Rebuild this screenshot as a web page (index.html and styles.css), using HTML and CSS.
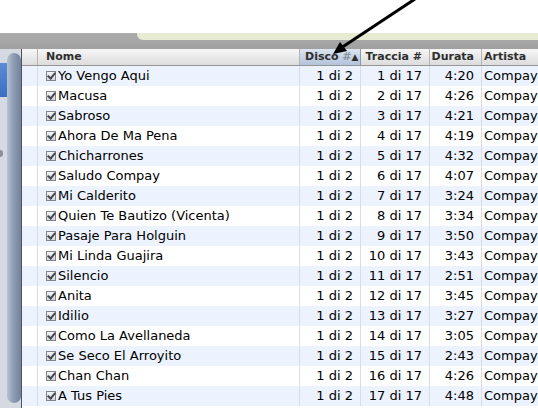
FILE: index.html
```html
<!DOCTYPE html>
<html>
	<head>
		<meta charset="UTF-8">
		<title>Libreria</title>
		<link rel="stylesheet" href="styles.css">
	</head>
	<body>
		<div class="top"></div>
		<div class="bar"><div class="field"></div></div>
		<div class="main">
			<div class="side">
				<div class="edge"><div class="sel"></div><div class="knob"></div></div>
				<div class="track"><div class="thumb"></div></div>
			</div>
			<div class="list">
				<div class="row head">
					<div class="c0"></div>
					<div class="c1">Nome</div>
					<div class="c2 sorted"><span>Disco <span class="hash">#</span></span><span class="tri">&#9650;</span></div>
					<div class="c3">Traccia #</div>
					<div class="c4">Durata</div>
					<div class="c5">Artista</div>
				</div>
				<div class="row"><div class="c0"></div><div class="c1"><i class="chk"></i>Yo Vengo Aqui</div><div class="c2">1 di 2</div><div class="c3">1 di 17</div><div class="c4">4:20</div><div class="c5">Compay</div></div>
				<div class="row"><div class="c0"></div><div class="c1"><i class="chk"></i>Macusa</div><div class="c2">1 di 2</div><div class="c3">2 di 17</div><div class="c4">4:26</div><div class="c5">Compay</div></div>
				<div class="row"><div class="c0"></div><div class="c1"><i class="chk"></i>Sabroso</div><div class="c2">1 di 2</div><div class="c3">3 di 17</div><div class="c4">4:21</div><div class="c5">Compay</div></div>
				<div class="row"><div class="c0"></div><div class="c1"><i class="chk"></i>Ahora De Ma Pena</div><div class="c2">1 di 2</div><div class="c3">4 di 17</div><div class="c4">4:19</div><div class="c5">Compay</div></div>
				<div class="row"><div class="c0"></div><div class="c1"><i class="chk"></i>Chicharrones</div><div class="c2">1 di 2</div><div class="c3">5 di 17</div><div class="c4">4:32</div><div class="c5">Compay</div></div>
				<div class="row"><div class="c0"></div><div class="c1"><i class="chk"></i>Saludo Compay</div><div class="c2">1 di 2</div><div class="c3">6 di 17</div><div class="c4">4:07</div><div class="c5">Compay</div></div>
				<div class="row"><div class="c0"></div><div class="c1"><i class="chk"></i>Mi Calderito</div><div class="c2">1 di 2</div><div class="c3">7 di 17</div><div class="c4">3:24</div><div class="c5">Compay</div></div>
				<div class="row"><div class="c0"></div><div class="c1"><i class="chk"></i>Quien Te Bautizo (Vicenta)</div><div class="c2">1 di 2</div><div class="c3">8 di 17</div><div class="c4">3:34</div><div class="c5">Compay</div></div>
				<div class="row"><div class="c0"></div><div class="c1"><i class="chk"></i>Pasaje Para Holguin</div><div class="c2">1 di 2</div><div class="c3">9 di 17</div><div class="c4">3:50</div><div class="c5">Compay</div></div>
				<div class="row"><div class="c0"></div><div class="c1"><i class="chk"></i>Mi Linda Guajira</div><div class="c2">1 di 2</div><div class="c3">10 di 17</div><div class="c4">3:43</div><div class="c5">Compay</div></div>
				<div class="row"><div class="c0"></div><div class="c1"><i class="chk"></i>Silencio</div><div class="c2">1 di 2</div><div class="c3">11 di 17</div><div class="c4">2:51</div><div class="c5">Compay</div></div>
				<div class="row"><div class="c0"></div><div class="c1"><i class="chk"></i>Anita</div><div class="c2">1 di 2</div><div class="c3">12 di 17</div><div class="c4">3:45</div><div class="c5">Compay</div></div>
				<div class="row"><div class="c0"></div><div class="c1"><i class="chk"></i>Idilio</div><div class="c2">1 di 2</div><div class="c3">13 di 17</div><div class="c4">3:27</div><div class="c5">Compay</div></div>
				<div class="row"><div class="c0"></div><div class="c1"><i class="chk"></i>Como La Avellaneda</div><div class="c2">1 di 2</div><div class="c3">14 di 17</div><div class="c4">3:05</div><div class="c5">Compay</div></div>
				<div class="row"><div class="c0"></div><div class="c1"><i class="chk"></i>Se Seco El Arroyito</div><div class="c2">1 di 2</div><div class="c3">15 di 17</div><div class="c4">2:43</div><div class="c5">Compay</div></div>
				<div class="row"><div class="c0"></div><div class="c1"><i class="chk"></i>Chan Chan</div><div class="c2">1 di 2</div><div class="c3">16 di 17</div><div class="c4">4:26</div><div class="c5">Compay</div></div>
				<div class="row"><div class="c0"></div><div class="c1"><i class="chk"></i>A Tus Pies</div><div class="c2">1 di 2</div><div class="c3">17 di 17</div><div class="c4">4:48</div><div class="c5">Compay</div></div>
			</div>
		</div>
		<!-- freccia nera sopra l'intestazione -->
		<svg class="arrow" width="538" height="70" viewBox="0 0 538 70">
			<line x1="415" y1="-1" x2="341" y2="48" stroke="#000" stroke-width="3"/>
			<polygon points="333,54 347,51 340,42" fill="#000"/>
		</svg>
	</body>
</html>
```

FILE: styles.css
```css
*{ margin: 0; padding: 0; box-sizing: border-box;}
body{ width: 538px; height: 408px; overflow: hidden; background: #fff; font-family: "DejaVu Sans", "Liberation Sans", sans-serif; position: relative;}
.top{ height: 33px;}
.bar{ height: 16px; background: linear-gradient(#acacac, #a0a0a0); display: flex; justify-content: flex-end;}
.field{ width: 401px; height: 7px; background: #e8ebd4; border-bottom-left-radius: 6px;}
.main{ display: flex; height: 359px;}
/* barra laterale con lo scorrimento */
.side{ width: 22px; display: flex; border-right: 1px solid #4f5560; background: #d5dae2;}
.edge{ width: 7px; display: flex; flex-direction: column;}
.sel{ margin-top: 14px; height: 34px; background: linear-gradient(#5d8bd5, #3c6fc2);}
.knob{ margin-top: 53px; width: 3px; height: 7px; background: #8a8f98; border-radius: 0 4px 4px 0;}
.track{ width: 14px; padding: 4px 0 5px;}
.thumb{ height: 100%; border-radius: 7px; background: linear-gradient(90deg, #b7c2d2, #8e9db5 45%, #71829e);}
.list{ flex: 1; min-width: 0;}
/* righe della tabella */
.row{ display: grid; grid-template-columns: 16px 262px 61px 69px 52px 1fr; height: 20px; font-size: 13px; line-height: 20px; color: #000;}
.row:nth-child(even){ background: #edf3fe;}
.row > div{ border-right: 1px solid #d9dde3; white-space: nowrap; overflow: hidden;}
.row .c1{ padding-left: 8px; display: flex; align-items: center;}
.row .c2, .row .c3, .row .c4{ text-align: right; padding-right: 7px;}
.row .c5{ padding-left: 2px; border-right: 0; overflow: visible;}
.chk{ display: inline-block; width: 10px; height: 10px; margin-right: 2px; border: 1px solid #80838a; background: linear-gradient(#f4f5f7, #d3d6db); position: relative;}
.chk::after{ content: ""; position: absolute; left: 2px; top: -1px; width: 3px; height: 6px; border: solid #45484f; border-width: 0 2px 2px 0; transform: rotate(40deg);}
/* intestazione */
.row.head{ height: 17px; line-height: 16px; font-size: 11px; font-weight: bold; color: #2e2e2e; background: linear-gradient(#f6f6f6, #dcdcdc); border-bottom: 1px solid #969696;}
.row.head > div{ border-right: 1px solid #b4b4b4;}
.row.head .c1{ padding-left: 8px;}
.row.head .c5{ border-right: 0;}
.row.head .sorted{ background: linear-gradient(#dbe4f0, #b3c3da); display: flex; justify-content: space-between; text-align: left; padding-left: 5px; padding-right: 4px; border-right-color: #8e9aab;}
.hash{ color: #8a93a0;}
.tri{ font-size: 9px;}
.arrow{ position: absolute; left: 0; top: 0; pointer-events: none;}
```
